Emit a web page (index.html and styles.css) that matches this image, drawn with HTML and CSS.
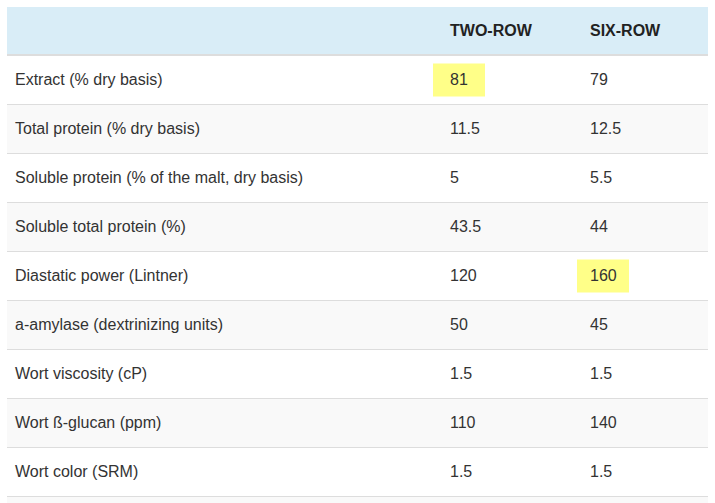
FILE: index.html
```html
<!DOCTYPE html>
<html lang="en">
<head>
<meta charset="utf-8">
<title>Malt specifications</title>
<link rel="stylesheet" href="styles.css">
</head>
<body>
<table class="spec">
  <colgroup>
    <col class="c-name">
    <col class="c-two">
    <col class="c-six">
  </colgroup>
  <thead>
    <tr><th></th><th>TWO-ROW</th><th>SIX-ROW</th></tr>
  </thead>
  <tbody>
    <tr><td>Extract (% dry basis)</td><td><span class="hl">81</span></td><td>79</td></tr>
    <tr><td>Total protein (% dry basis)</td><td>11.5</td><td>12.5</td></tr>
    <tr><td>Soluble protein (% of the malt, dry basis)</td><td>5</td><td>5.5</td></tr>
    <tr><td>Soluble total protein (%)</td><td>43.5</td><td>44</td></tr>
    <tr><td>Diastatic power (Lintner)</td><td>120</td><td><span class="hl">160</span></td></tr>
    <tr><td>a-amylase (dextrinizing units)</td><td>50</td><td>45</td></tr>
    <tr><td>Wort viscosity (cP)</td><td>1.5</td><td>1.5</td></tr>
    <tr><td>Wort ß-glucan (ppm)</td><td>110</td><td>140</td></tr>
    <tr><td>Wort color (SRM)</td><td>1.5</td><td>1.5</td></tr>
    <tr><td>&nbsp;</td><td></td><td></td></tr>
  </tbody>
</table>
</body>
</html>
```
FILE: styles.css
```css
html, body {
  margin: 0;
  padding: 0;
  background: #fff;
}
body {
  padding: 7px;
  font-family: "Liberation Sans", Arial, sans-serif;
  font-size: 16px;
  color: #333;
}
.spec {
  width: 701px;
  border-collapse: collapse;
  border-spacing: 0;
  table-layout: fixed;
}
.c-name { width: 435px; }
.c-two { width: 140px; }
.c-six { width: 126px; }
.spec th {
  background: #d9edf7;
  text-align: left;
  font-weight: bold;
  color: #222;
  padding: 15px 8px 14px;
  line-height: 18px;
  border-bottom: 2px solid #ddd;
}
.spec td {
  padding: 15px 8px;
  line-height: 18px;
  border-top: 1px solid #ddd;
  text-align: left;
  vertical-align: middle;
}
.spec tbody tr:nth-child(even) td {
  background: #f9f9f9;
}
.hl {
  position: relative;
  display: inline-block;
  z-index: 0;
}
.hl::before {
  content: "";
  position: absolute;
  left: 50%;
  top: 50%;
  width: 52px;
  height: 33px;
  transform: translate(-50%, -50%);
  background: #ffff88;
  z-index: -1;
}
```
